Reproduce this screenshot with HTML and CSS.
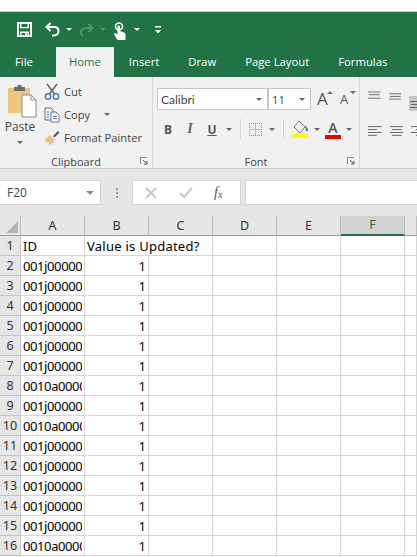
FILE: index.html
```html
<!DOCTYPE html>
<html lang="en">
<head>
    <meta charset="utf-8">
    <title>Book1 - Excel</title>
    <link rel="stylesheet" href="styles.css">
</head>
<body>
    <div class="window-top"></div>

    <!-- Title bar with quick access toolbar -->
    <div class="title-bar">
        <svg class="qat-save" width="15" height="15" viewBox="0 0 16 16"><path d="M1 1h14v14H1z" fill="none" stroke="#fff" stroke-width="2"/><path d="M4 1v5h8V1" fill="none" stroke="#fff" stroke-width="1.5"/><path d="M4 15v-4h8v4" fill="none" stroke="#fff" stroke-width="1.5"/><path d="M8.5 12h2v3h-2z" fill="#fff"/></svg>
        <svg class="qat-undo" width="15" height="15" viewBox="0 0 15 15"><path d="M5.500 1 1.500 5l4 4" fill="none" stroke="#fff" stroke-width="2"/><path d="M2 5h7c3 0 4.500 1.800 4.500 4S12 13.500 9 13.500H7" fill="none" stroke="#fff" stroke-width="2"/></svg>
        <span class="qat-arrow"></span>
        <svg class="qat-redo" width="15" height="15" viewBox="0 0 15 15"><path d="M9.500 2l4 4-4 4" fill="none" stroke="#4e9270" stroke-width="2"/><path d="M13 6H7c-3 0-5 2-5 4.500 0 1.500.5 2.500 1.500 3.500" fill="none" stroke="#4e9270" stroke-width="2"/></svg>
        <span class="qat-arrow dim"></span>
        <svg class="qat-touch" width="13" height="18" viewBox="0 0 13 18"><circle cx="6" cy="4.500" r="3.500" fill="none" stroke="#fff" stroke-width="1.600"/><path d="M4.500 4.500C4.500 3 7 3 7 4.500V9l4 1.500c1.200.5 1.500 1.500 1.500 2.500v5H4.500L1 12.500c-.5-1.200 1-2.200 2-1.200l1.500 1.300z" fill="#fff"/></svg>
        <span class="qat-arrow"></span>
        <svg class="qat-more" width="6" height="8" viewBox="0 0 6 8"><path d="M0 0h6v1.500H0z" fill="#fff"/><path d="M0 4h6L3 7.500z" fill="#fff"/></svg>
    </div>

    <!-- Tabs -->
    <div class="tabs">
        <span class="tab tab-file">File</span>
        <span class="tab tab-home">Home</span>
        <span class="tab tab-insert">Insert</span>
        <span class="tab tab-draw">Draw</span>
        <span class="tab tab-layout">Page Layout</span>
        <span class="tab">Formulas</span>
    </div>

    <!-- Ribbon -->
    <div class="ribbon">
        <div class="group group-clipboard">
            <div class="group-body clip-body">
                <div class="paste">
                    <svg width="30" height="33" viewBox="0 0 30 33"><path d="M1 3h22v25H1z" fill="#edc57f"/><path d="M7 2h3l1-2h3l1 2h3v4H7z" fill="#6d6d6d"/><path d="M15 10h9l5 5v17H15z" fill="#fff" stroke="#8a8a8a"/><path d="M24 10v5h5" fill="none" stroke="#8a8a8a"/></svg>
                    <span class="paste-label">Paste</span>
                    <span class="arrow"></span>
                </div>
                <div class="clip-list">
                    <div class="clip-row">
                        <svg width="16" height="17" viewBox="0 0 16 17"><path d="M3 1l7.500 10M13 1 5.500 11" fill="none" stroke="#666" stroke-width="1.500"/><circle cx="4" cy="13.500" r="2.700" fill="none" stroke="#3f7ab5" stroke-width="1.400"/><circle cx="12" cy="13.500" r="2.700" fill="none" stroke="#3f7ab5" stroke-width="1.400"/></svg>
                        <span>Cut</span>
                    </div>
                    <div class="clip-row">
                        <svg width="16" height="16" viewBox="0 0 16 16"><path d="M1 1h6l2 2v10H1z" fill="#f4f4f4" stroke="#6f6f6f"/><path d="M7 5h5l3 3v7H7z" fill="#fff" stroke="#6f6f6f"/><path d="M3 5h2M3 7.500h2M3 10h2M9 9.500h4M9 11.500h4" stroke="#3f7ab5"/></svg>
                        <span>Copy</span>
                        <span class="arrow copy-arrow"></span>
                    </div>
                    <div class="clip-row">
                        <svg width="16" height="16" viewBox="0 0 16 16"><path d="M1 9l5-4 5 5-4 5-2-1-1-2-2 1z" fill="#e8c48c"/><path d="M9 6l5-5 1.500 1.500-5 5z" fill="#555"/></svg>
                        <span>Format Painter</span>
                    </div>
                </div>
            </div>
            <div class="group-label">
                <span>Clipboard</span>
                <svg class="launcher" width="8" height="8" viewBox="0 0 8 8"><path d="M.5 7V.5H7" fill="none" stroke="#888"/><path d="M3 3l4 4M7 4v3H4" fill="none" stroke="#555"/></svg>
            </div>
        </div>

        <div class="group group-font">
            <div class="group-body font-body">
                <div class="font-row">
                    <div class="combo combo-font">Calibri<span class="arrow"></span></div>
                    <div class="combo combo-size">11<span class="arrow"></span></div>
                    <span class="size-a size-up">A<i class="tip up"></i></span>
                    <span class="size-a size-down">A<i class="tip down"></i></span>
                </div>
                <div class="font-row font-row-2">
                    <span class="style-btn bold">B</span>
                    <span class="style-btn italic">I</span>
                    <span class="style-btn under">U</span>
                    <span class="arrow"></span>
                    <span class="vsep"></span>
                    <span class="borders"></span>
                    <span class="arrow"></span>
                    <span class="vsep"></span>
                    <svg class="fill-icon" width="17" height="20" viewBox="0 0 17 20"><path d="M2 8l5-6 6 6-5 6z" fill="none" stroke="#777"/><path d="M13 6l3 4v2h-2z" fill="#3f7ab5"/><path d="M0 15h16v4H0z" fill="#ffff00"/></svg>
                    <span class="arrow"></span>
                    <span class="color-a">A</span>
                    <span class="arrow"></span>
                </div>
            </div>
            <div class="group-label">
                <span>Font</span>
                <svg class="launcher" width="8" height="8" viewBox="0 0 8 8"><path d="M.5 7V.5H7" fill="none" stroke="#888"/><path d="M3 3l4 4M7 4v3H4" fill="none" stroke="#555"/></svg>
            </div>
        </div>

        <div class="group-align">
            <div class="align-row">
                <svg width="14" height="10" viewBox="0 0 14 10"><path d="M0 .5h14M1 3.500h12M0 7.500h14" stroke="#666"/></svg>
                <svg width="14" height="10" viewBox="0 0 14 10"><path d="M0 2.500h14M1 5.500h12M0 8.500h14" stroke="#666"/></svg>
                <span class="align-active"><svg width="14" height="13" viewBox="0 0 14 13"><path d="M1 5.500h13M2 8.500h12M1 11.500h13" stroke="#666"/></svg></span>
            </div>
            <div class="align-row">
                <svg width="14" height="10" viewBox="0 0 14 10"><path d="M0 .5h14M0 3.500h9M0 6.500h14M0 9.500h9" stroke="#666"/></svg>
                <svg width="14" height="10" viewBox="0 0 14 10"><path d="M0 .5h14M2 3.500h10M0 6.500h14M2 9.500h10" stroke="#666"/></svg>
                <svg width="14" height="10" viewBox="0 0 14 10"><path d="M0 .5h14M5 3.500h9M0 6.500h14M5 9.500h9" stroke="#666"/></svg>
            </div>
        </div>
    </div>

    <!-- Formula bar -->
    <div class="formula-bar">
        <div class="name-box">F20<span class="arrow"></span></div>
        <span class="grip"></span>
        <div class="fx-box">
            <svg width="13" height="12" viewBox="0 0 13 12"><path d="M1 1l10 10M11 1 1 11" stroke="#c9c9c9" stroke-width="2"/></svg>
            <svg width="14" height="12" viewBox="0 0 14 12"><path d="M1 6l4 4 8-9" fill="none" stroke="#c9c9c9" stroke-width="2"/></svg>
            <span class="fx">f<sub>x</sub></span>
        </div>
        <div class="formula-input"></div>
    </div>

    <!-- Sheet -->
    <table class="sheet">
        <colgroup>
            <col class="col-head"><col class="col-n"><col class="col-n"><col class="col-n"><col class="col-n"><col class="col-n"><col class="col-n"><col class="col-last">
        </colgroup>
        <tr class="head-row">
            <th class="corner"><span class="corner-mark"></span></th><th>A</th><th>B</th><th>C</th><th>D</th><th>E</th><th class="selected">F</th><th></th>
        </tr>
        <tr><th>1</th><td>ID</td><td class="spill">Value is Updated?</td><td></td><td></td><td></td><td></td><td></td></tr>
        <tr><th>2</th><td><div class="clip">001j00000Q</div></td><td class="num">1</td><td></td><td></td><td></td><td></td><td></td></tr>
        <tr><th>3</th><td><div class="clip">001j00000Q</div></td><td class="num">1</td><td></td><td></td><td></td><td></td><td></td></tr>
        <tr><th>4</th><td><div class="clip">001j00000Q</div></td><td class="num">1</td><td></td><td></td><td></td><td></td><td></td></tr>
        <tr><th>5</th><td><div class="clip">001j00000Q</div></td><td class="num">1</td><td></td><td></td><td></td><td></td><td></td></tr>
        <tr><th>6</th><td><div class="clip">001j00000Q</div></td><td class="num">1</td><td></td><td></td><td></td><td></td><td></td></tr>
        <tr><th>7</th><td><div class="clip">001j00000Q</div></td><td class="num">1</td><td></td><td></td><td></td><td></td><td></td></tr>
        <tr><th>8</th><td><div class="clip">0010a00000</div></td><td class="num">1</td><td></td><td></td><td></td><td></td><td></td></tr>
        <tr><th>9</th><td><div class="clip">001j00000Q</div></td><td class="num">1</td><td></td><td></td><td></td><td></td><td></td></tr>
        <tr><th>10</th><td><div class="clip">0010a00000</div></td><td class="num">1</td><td></td><td></td><td></td><td></td><td></td></tr>
        <tr><th>11</th><td><div class="clip">001j00000Q</div></td><td class="num">1</td><td></td><td></td><td></td><td></td><td></td></tr>
        <tr><th>12</th><td><div class="clip">001j00000Q</div></td><td class="num">1</td><td></td><td></td><td></td><td></td><td></td></tr>
        <tr><th>13</th><td><div class="clip">001j00000Q</div></td><td class="num">1</td><td></td><td></td><td></td><td></td><td></td></tr>
        <tr><th>14</th><td><div class="clip">001j00000Q</div></td><td class="num">1</td><td></td><td></td><td></td><td></td><td></td></tr>
        <tr><th>15</th><td><div class="clip">001j00000Q</div></td><td class="num">1</td><td></td><td></td><td></td><td></td><td></td></tr>
        <tr><th>16</th><td><div class="clip">0010a00000</div></td><td class="num">1</td><td></td><td></td><td></td><td></td><td></td></tr>
    </table>
</body>
</html>
```

FILE: styles.css
```css
html, body {
    margin: 0;
    padding: 0;
    height: 100%;
    overflow: hidden;
    background: #fff;
}
body {
    font-family: "Open Sans", "Noto Sans", sans-serif;
    font-size: 11.2px;
    color: #444;
}
.window-top {
    height: 11px;
    background: #fff;
    border-bottom: 1px solid #c9c9c9;
}

/* title bar */
.title-bar {
    height: 35px;
    background: #217346;
    display: flex;
    align-items: center;
    padding-left: 17px;
}
.qat-undo { margin-left: 13px; }
.qat-redo { margin-left: 7px; }
.qat-touch { margin-left: 7px; margin-top: 2px; }
.qat-arrow {
    width: 0;
    height: 0;
    margin-left: 6px;
    border-left: 3px solid transparent;
    border-right: 3px solid transparent;
    border-top: 3px solid #fff;
}
.qat-arrow.dim { border-top-color: #4e9270; }
.qat-touch + .qat-arrow { margin-left: 8px; }
.qat-more { margin-left: 15px; }

/* tabs */
.tabs {
    height: 30px;
    background: #217346;
    display: flex;
    align-items: stretch;
    color: #fff;
    font-size: 11.3px;
}
.tab {
    line-height: 30px;
    margin-left: 29px;
}
.tab-file { margin-left: 15px; }
.tab-home {
    margin-left: 23px;
    padding: 0 13px;
    background: #f1f1f1;
    color: #217346;
}
.tab-insert { margin-left: 15px; }

/* ribbon */
.ribbon {
    height: 92px;
    background: #f1f1f1;
    border-bottom: 1px solid #c8c8c8;
    box-sizing: border-box;
    display: flex;
    overflow: hidden;
}
.group {
    display: flex;
    flex-direction: column;
    flex: none;
    box-sizing: border-box;
    height: 91px;
    border-right: 1px solid #d8d8d8;
}
.group-clipboard { width: 153px; }
.group-font { width: 207px; }
.group-body { flex: 1; }
.group-label {
    height: 14px;
    display: flex;
    justify-content: center;
    align-items: center;
    position: relative;
    font-size: 11px;
    color: #444;
}
.launcher {
    position: absolute;
    right: 4px;
    bottom: 3px;
}
.arrow {
    display: inline-block;
    width: 0;
    height: 0;
    border-left: 3px solid transparent;
    border-right: 3px solid transparent;
    border-top: 3px solid #666;
}

/* clipboard */
.clip-body {
    display: flex;
    padding-top: 8px;
}
.paste {
    width: 40px;
    display: flex;
    flex-direction: column;
    align-items: center;
    color: #444;
    font-size: 12px;
}
.paste svg { margin-left: 3px; }
.paste-label { line-height: 17px; }
.paste .arrow { margin-top: 6px; }
.clip-list {
    margin: -2px 0 0 4px;
    display: flex;
    flex-direction: column;
    gap: 6px;
}
.clip-row {
    height: 17px;
    display: flex;
    align-items: center;
    gap: 4px;
    white-space: nowrap;
}
.clip-row svg { flex: none; }
.copy-arrow { margin-left: 10px; }

/* font */
.font-body {
    padding: 11px 0 0 4px;
}
.font-row {
    display: flex;
    align-items: center;
}
.combo {
    height: 22px;
    box-sizing: border-box;
    border: 1px solid #c6c6c6;
    background: #fff;
    display: flex;
    align-items: center;
    justify-content: space-between;
    padding: 0 5px 0 3px;
}
.combo-font {
    width: 111px;
    font-family: "Lato", sans-serif;
    font-size: 12px;
}
.combo-size { width: 43px; }
.size-a {
    position: relative;
    color: #555;
    font-size: 17px;
    line-height: 22px;
    margin-left: 6px;
    width: 16px;
}
.size-down { font-size: 13px; margin-left: 7px; }
.tip {
    position: absolute;
    right: 0;
    top: 3px;
    width: 0;
    height: 0;
    border-left: 3px solid transparent;
    border-right: 3px solid transparent;
}
.tip.up { border-bottom: 3px solid #3f7ab5; }
.tip.down { border-top: 3px solid #3f7ab5; }
.font-row-2 {
    margin-top: 8px;
    height: 22px;
}
.style-btn {
    width: 22px;
    text-align: center;
    color: #555;
    font-size: 12px;
}
.bold { font-weight: 700; }
.italic { font-style: italic; font-family: "Liberation Serif", serif; font-size: 14px; font-weight: 700; color: #666; }
.under { text-decoration: underline; font-weight: 700; }
.under + .arrow { margin-left: 3px; }
.vsep {
    width: 1px;
    height: 20px;
    background: #d4d4d4;
    margin: 0 8px;
}
.borders {
    width: 13px;
    height: 13px;
    border: 1px dotted #888;
    background:
        linear-gradient(#bbb, #bbb) center / 100% 1px no-repeat,
        linear-gradient(#bbb, #bbb) center / 1px 100% no-repeat;
    box-sizing: border-box;
}
.borders + .arrow { margin-left: 7px; }
.fill-icon + .arrow { margin-left: 5px; }
.color-a {
    width: 16px;
    margin-left: 5px;
    text-align: center;
    color: #555;
    font-weight: 600;
    font-size: 14px;
    line-height: 15px;
    border-bottom: 4px solid #ee0000;
}
.color-a + .arrow { margin-left: 5px; }

/* alignment */
.group-align {
    padding: 14px 0 0 8px;
    display: flex;
    flex-direction: column;
    gap: 25px;
    flex: none;
    width: 57px;
}
.align-row {
    display: flex;
    gap: 8px;
    height: 10px;
    align-items: center;
}
.align-active {
    width: 16px;
    height: 15px;
    background: #c6c6c6;
    flex: none;
    margin-top: 14px;
}

/* formula bar */
.formula-bar {
    height: 47px;
    box-sizing: border-box;
    background: #e6e6e6;
    padding-top: 11px;
    display: flex;
    align-items: flex-start;
}
.name-box {
    width: 101px;
    height: 25px;
    box-sizing: border-box;
    background: #fff;
    border: 1px solid #d4d4d4;
    border-left: 0;
    display: flex;
    align-items: center;
    justify-content: space-between;
    padding: 0 6px 0 7px;
    color: #444;
    font-size: 12px;
}
.name-box .arrow { border-left-width: 4px; border-right-width: 4px; border-top-width: 4px; border-top-color: #888; }
.grip {
    width: 2px;
    height: 10px;
    margin: 8px 14px 0 15px;
    background: repeating-linear-gradient(#999 0 2px, transparent 2px 4px);
}
.fx-box {
    width: 109px;
    height: 25px;
    box-sizing: border-box;
    background: #fff;
    border: 1px solid #d4d4d4;
    display: flex;
    align-items: center;
    gap: 21px;
    padding-left: 12px;
}
.fx {
    font-family: "Liberation Serif", serif;
    font-style: italic;
    font-size: 14px;
    color: #555;
}
.fx sub { font-size: 10px; vertical-align: -1px; }
.formula-input {
    flex: 1;
    height: 25px;
    box-sizing: border-box;
    margin-left: 4px;
    background: #fff;
    border: 1px solid #d4d4d4;
    border-right: 0;
}

/* sheet */
.sheet {
    border-collapse: separate;
    border-spacing: 0;
    table-layout: fixed;
    width: 417px;
    font-family: "Noto Sans", sans-serif;
    font-size: 13px;
    color: #000;
}
.col-head { width: 21px; }
.col-n { width: 64px; }
.col-last { width: 12px; }
.sheet tr { height: 20px; }
.sheet th {
    font-size: 12.5px;
    font-weight: 400;
    background: #e6e6e6;
    color: #333;
    padding: 0;
    box-sizing: border-box;
    border-right: 1px solid #c6c6c6;
    border-bottom: 1px solid #c6c6c6;
    text-align: center;
    height: 20px;
    line-height: 18px;
}
.head-row { height: 19px; }
.head-row th {
    border-bottom: 1px solid #9b9b9b;
    border-right: 1px solid #bcbcbc;
    height: 19px;
}
.head-row th.selected {
    background: #d2d2d2;
    color: #217346;
    border-bottom: 2px solid #217346;
}
.corner { position: relative; }
.corner-mark {
    position: absolute;
    right: 2px;
    bottom: 2px;
    width: 0;
    height: 0;
    border-left: 12px solid transparent;
    border-bottom: 12px solid #b4b4b4;
}
.sheet td {
    padding: 0 2px;
    box-sizing: border-box;
    border-right: 1px solid #d6d6d6;
    border-bottom: 1px solid #d6d6d6;
    white-space: nowrap;
    height: 20px;
    line-height: 18px;
}
.sheet td.spill { border-right: 0; overflow: visible; letter-spacing: 0.25px; }
.sheet td.num { text-align: right; }
.clip { overflow: hidden; letter-spacing: -0.4px; }
```
